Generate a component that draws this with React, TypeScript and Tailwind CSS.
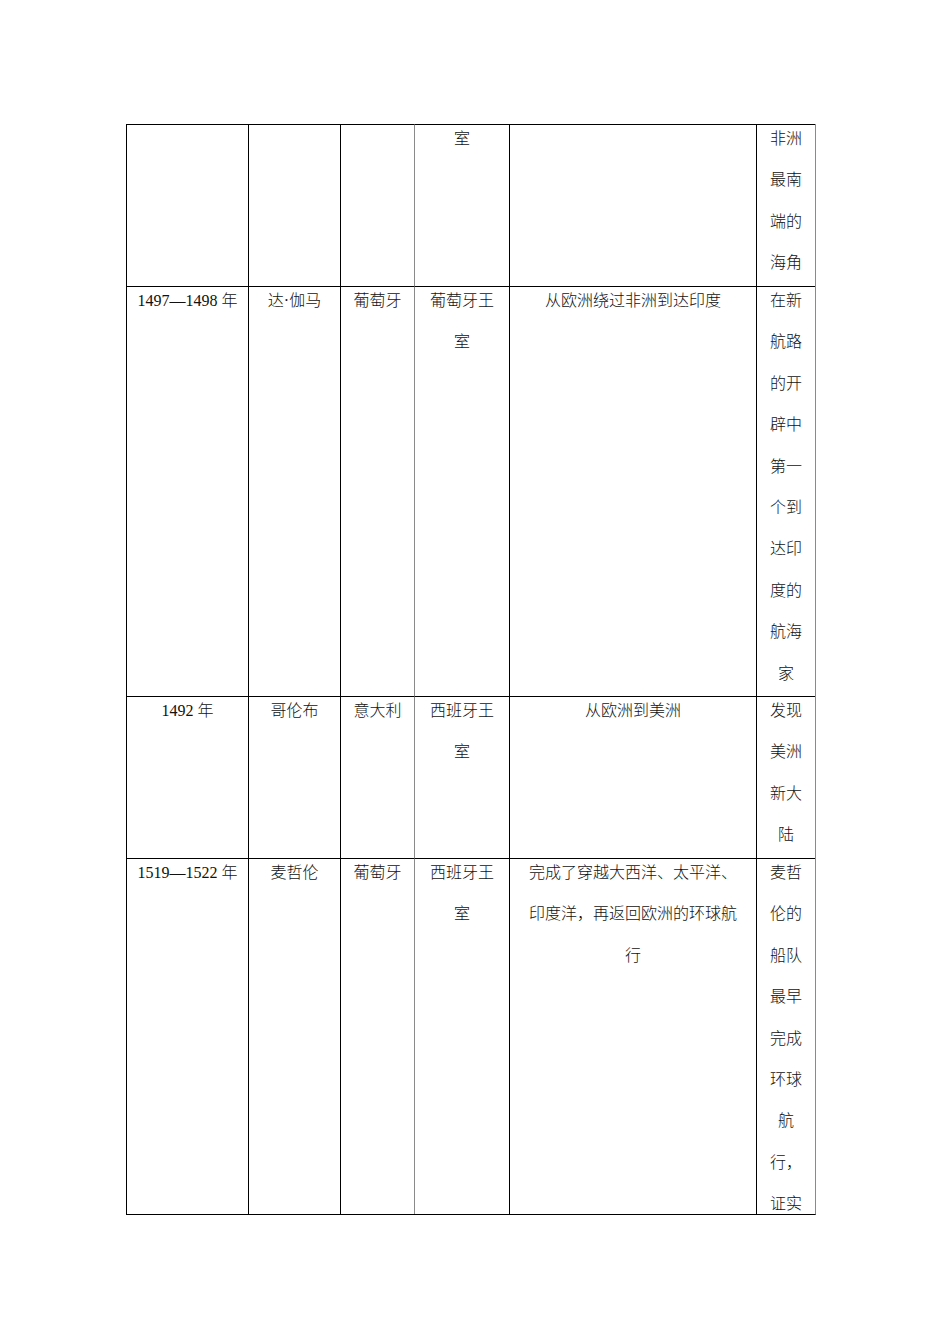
const rows: { h: string; cells: string[][] }[] = [
  {
    h: 'h-[162px]',
    cells: [[], [], [], ['室'], [], ['非洲', '最南', '端的', '海角']],
  },
  {
    h: 'h-[410px]',
    cells: [
      ['1497—1498 年'],
      ['达·伽马'],
      ['葡萄牙'],
      ['葡萄牙王', '室'],
      ['从欧洲绕过非洲到达印度'],
      ['在新', '航路', '的开', '辟中', '第一', '个到', '达印', '度的', '航海', '家'],
    ],
  },
  {
    h: 'h-[162px]',
    cells: [
      ['1492 年'],
      ['哥伦布'],
      ['意大利'],
      ['西班牙王', '室'],
      ['从欧洲到美洲'],
      ['发现', '美洲', '新大', '陆'],
    ],
  },
  {
    h: 'h-[356px]',
    cells: [
      ['1519—1522 年'],
      ['麦哲伦'],
      ['葡萄牙'],
      ['西班牙王', '室'],
      ['完成了穿越大西洋、太平洋、', '印度洋，再返回欧洲的环球航', '行'],
      ['麦哲', '伦的', '船队', '最早', '完成', '环球', '航', '行，', '证实'],
    ],
  },
];

// column 4 has a grey rule on its left, like the scan
const colBorder = [
  'border-black',
  'border-black',
  'border-black',
  'border-l-[#8a8a8a] border-t-black',
  'border-black',
  'border-black',
];

export default function App() {
  return (
    <div
      className="min-h-[1344px] bg-white pt-[124px] pl-[126px] text-[#111]"
      style={{ fontFamily: '"Liberation Serif", "Noto Sans CJK SC", serif' }}
    >
      <div className="grid w-[690px] grid-cols-[122px_92px_74px_95px_247px_59px] border-r border-b border-r-[#8a8a8a] border-b-black">
        {rows.map((row, ri) =>
          row.cells.map((lines, ci) => (
            <div
              key={`${ri}-${ci}`}
              className={`${row.h} overflow-hidden border-t border-l ${colBorder[ci]}`}
            >
              <div className="-mt-[7px] text-[16px] leading-[41.4px] font-light">
                {lines.map((t, li) => (
                  <div key={li} className="text-center whitespace-nowrap">
                    {t}
                  </div>
                ))}
              </div>
            </div>
          ))
        )}
      </div>
    </div>
  );
}
